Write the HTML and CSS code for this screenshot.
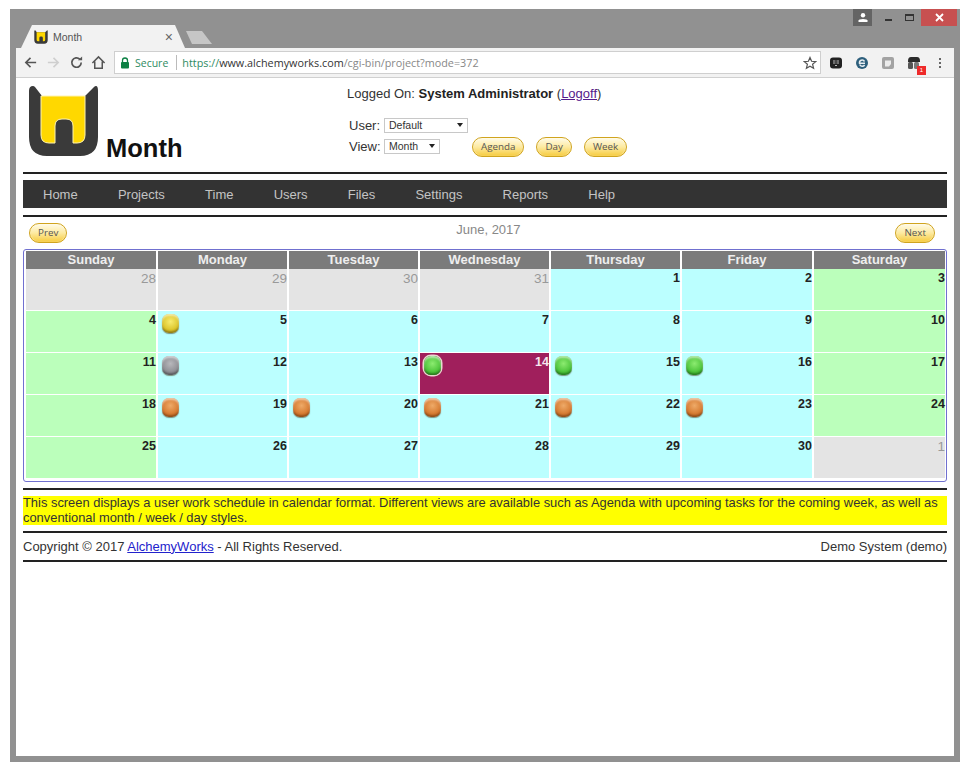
FILE: index.html
```html
<!DOCTYPE html>
<html lang="en">
<head>
<meta charset="utf-8">
<title>Month</title>
<link rel="stylesheet" href="styles.css">
</head>
<body>
<div class="window">
  <div class="titlebar">
    <div class="tab">
      <svg class="favicon" viewBox="0 0 71 72"><path fill="#3a3a3a" d="M1 6Q1 1 5 1Q6 1 7 2L14 11H57L66 2Q67 1 68 1Q70 1 70 6V52Q70 71 52 71H19Q1 71 1 52Z"/><path fill="#ffd800" d="M13 11H57V50Q57 58 49 58H45V41Q45 34 38 34H34Q27 34 27 41V58H21Q13 58 13 50Z"/></svg>
      <span class="tab-title">Month</span>
      <span class="tab-close">×</span>
    </div>
    <div class="newtab"></div>
    <div class="winctl">
      <div class="ctl user"><svg width="10" height="9" viewBox="0 0 10 9"><circle cx="5" cy="2.3" r="2.2" fill="#fff"/><path d="M0.5 9V7.6Q0.5 6 5 6Q9.5 6 9.5 7.6V9Z" fill="#fff"/></svg></div>
      <div class="ctl min"><span class="min-bar"></span></div>
      <div class="ctl max"><span class="max-box"></span></div>
      <div class="ctl close"><svg width="9" height="9" viewBox="0 0 9 9"><path d="M1 1L8 8M8 1L1 8" stroke="#fff" stroke-width="1.8"/></svg></div>
    </div>
  </div>
  <div class="toolbar">
    <svg class="tb-ico" viewBox="0 0 16 16"><path d="M14 8H3M8 3L3 8L8 13" fill="none" stroke="#555" stroke-width="1.7"/></svg>
    <svg class="tb-ico" viewBox="0 0 16 16"><path d="M2 8H13M8 3L13 8L8 13" fill="none" stroke="#cfcfcf" stroke-width="1.7"/></svg>
    <svg class="tb-ico" viewBox="0 0 16 16"><path d="M13 8A5 5 0 1 1 11.500 4.500" fill="none" stroke="#555" stroke-width="1.8"/><path d="M9.500 5.500H14V1.500Z" fill="#555"/></svg>
    <svg class="tb-ico" viewBox="0 0 16 16"><path d="M1.500 8.500L8 2L14.500 8.500M4 7V14H12V7" fill="none" stroke="#555" stroke-width="1.6"/></svg>
    <div class="omnibox">
      <svg class="lock" viewBox="0 0 10 12"><path d="M2.500 6V3.500A2.500 2.500 0 0 1 7.500 3.500V6" fill="none" stroke="#0b8043" stroke-width="1.300"/><rect x="1" y="5" width="8" height="6.500" rx="1" fill="#0b8043"/></svg>
      <span class="secure">Secure</span>
      <span class="omni-sep"></span>
      <span class="url"><span class="url-scheme">https://</span><span class="url-host">www.alchemyworks.com</span>/cgi-bin/project?mode=372</span>
      <svg class="star" viewBox="0 0 14 14"><path d="M7 1.500L8.600 5.300L12.700 5.600L9.600 8.300L10.600 12.300L7 10.200L3.400 12.300L4.400 8.300L1.300 5.600L5.400 5.300Z" fill="none" stroke="#555" stroke-width="1.200"/></svg>
    </div>
    <div class="exts">
      <svg class="ext" viewBox="0 0 14 14"><rect x="1" y="1.500" width="12" height="11" rx="3" fill="#222"/><path d="M4 5H6.500M7.500 5H10M4 7H6.500M7.500 7H10M6 9.500H8" stroke="#bbb" stroke-width="1"/></svg>
      <svg class="ext" viewBox="0 0 14 14"><circle cx="7" cy="7" r="6" fill="#2d5f7c"/><path d="M10 7.300H4.500A2.700 2.700 0 0 1 9.500 5.500M4.700 8.500A2.800 2.800 0 0 0 9.600 9" fill="none" stroke="#e8eef2" stroke-width="1.500"/></svg>
      <svg class="ext" viewBox="0 0 14 14"><rect x="1" y="1" width="12" height="12" rx="2" fill="#a3a3a3"/><path d="M4 4.500H10V8L8 10.500H4Z" fill="#ececec"/></svg>
      <div class="ext-badged">
        <svg class="ext" viewBox="0 0 14 14"><path d="M1 5Q1 1 4 1H10Q13 1 13 5V6H1Z" fill="#2b2b2b"/><rect x="1" y="6" width="5" height="7" rx="1.500" fill="#555"/><rect x="7" y="6" width="5" height="7" rx="1.500" fill="#777"/></svg>
        <span class="badge">1</span>
      </div>
      <div class="kebab"><i></i><i></i><i></i></div>
    </div>
  </div>
  <div class="content">
    <header class="head">
      <div class="brand">
        <svg class="logo" viewBox="0 0 71 72"><path fill="#3a3a3a" d="M1 6Q1 1 5 1Q6 1 7 2L14 11H57L66 2Q67 1 68 1Q70 1 70 6V52Q70 71 52 71H19Q1 71 1 52Z"/><path fill="#ffd800" stroke="#fff3b0" stroke-width="1" d="M13 11H57V50Q57 58 49 58H45V41Q45 34 38 34H34Q27 34 27 41V58H21Q13 58 13 50Z"/></svg>
        <h1 class="page-title">Month</h1>
      </div>
      <div class="userbox">
        <div class="logged">Logged On: <b>System Administrator</b> (<a class="logoff" href="#">Logoff</a>)</div>
        <div class="selrow"><span class="sel-label">User:</span><span class="sel sel-user">Default<i class="arrow"></i></span></div>
        <div class="selrow viewrow"><span class="sel-label">View:</span><span class="sel sel-view">Month<i class="arrow"></i></span>
          <div class="viewbtns"><a class="pill">Agenda</a><a class="pill">Day</a><a class="pill">Week</a></div>
        </div>
      </div>
    </header>
    <hr class="rule rule-head">
    <nav class="nav">
      <a>Home</a><a>Projects</a><a>Time</a><a>Users</a><a>Files</a><a>Settings</a><a>Reports</a><a>Help</a>
    </nav>
    <hr class="rule rule-nav">
    <div class="monthbar">
      <a class="pill">Prev</a>
      <span class="monthname">June, 2017</span>
      <a class="pill">Next</a>
    </div>
    <div class="calendar">
      <div class="cal-head">
        <div>Sunday</div><div>Monday</div><div>Tuesday</div><div>Wednesday</div><div>Thursday</div><div>Friday</div><div>Saturday</div>
      </div>
      <div class="cal-body">
        <div class="day off"><span class="num">28</span></div>
        <div class="day off"><span class="num">29</span></div>
        <div class="day off"><span class="num">30</span></div>
        <div class="day off"><span class="num">31</span></div>
        <div class="day work"><span class="num">1</span></div>
        <div class="day work"><span class="num">2</span></div>
        <div class="day end"><span class="num">3</span></div>

        <div class="day end"><span class="num">4</span></div>
        <div class="day work"><i class="gem yellow"></i><span class="num">5</span></div>
        <div class="day work"><span class="num">6</span></div>
        <div class="day work"><span class="num">7</span></div>
        <div class="day work"><span class="num">8</span></div>
        <div class="day work"><span class="num">9</span></div>
        <div class="day end"><span class="num">10</span></div>

        <div class="day end"><span class="num">11</span></div>
        <div class="day work"><i class="gem grey"></i><span class="num">12</span></div>
        <div class="day work"><span class="num">13</span></div>
        <div class="day today"><i class="gem green ring"></i><span class="num">14</span></div>
        <div class="day work"><i class="gem green"></i><span class="num">15</span></div>
        <div class="day work"><i class="gem green"></i><span class="num">16</span></div>
        <div class="day end"><span class="num">17</span></div>

        <div class="day end"><span class="num">18</span></div>
        <div class="day work"><i class="gem orange"></i><span class="num">19</span></div>
        <div class="day work"><i class="gem orange"></i><span class="num">20</span></div>
        <div class="day work"><i class="gem orange"></i><span class="num">21</span></div>
        <div class="day work"><i class="gem orange"></i><span class="num">22</span></div>
        <div class="day work"><i class="gem orange"></i><span class="num">23</span></div>
        <div class="day end"><span class="num">24</span></div>

        <div class="day end"><span class="num">25</span></div>
        <div class="day work"><span class="num">26</span></div>
        <div class="day work"><span class="num">27</span></div>
        <div class="day work"><span class="num">28</span></div>
        <div class="day work"><span class="num">29</span></div>
        <div class="day work"><span class="num">30</span></div>
        <div class="day off"><span class="num">1</span></div>
      </div>
    </div>
    <hr class="rule rule-cal">
    <p class="note">This screen displays a user work schedule in calendar format. Different views are available such as Agenda with upcoming tasks for the coming week, as well as conventional month / week / day styles.</p>
    <hr class="rule rule-note">
    <footer class="foot">
      <span>Copyright © 2017 <a class="foot-link" href="#">AlchemyWorks</a> - All Rights Reserved.</span>
      <span>Demo System (demo)</span>
    </footer>
    <hr class="rule rule-foot">
  </div>
</div>
</body>
</html>
```
FILE: styles.css
```css
* { box-sizing: border-box; }
html, body { margin: 0; padding: 0; background: #fff; }
body { padding: 9px 13px 12px 10px; height: 774px; overflow: hidden; font-family: "Liberation Sans", Arial, sans-serif; color: #333; }
.window { height: 753px; background: #919191; padding: 0 6px 6px 6px; display: flex; flex-direction: column; }

.titlebar { height: 39px; display: flex; align-items: flex-end; margin-right: -4px; position: relative; flex: none; }
.tab { width: 164px; height: 23px; margin-left: 5px; background: #f2f2f2; clip-path: polygon(0 100%, 11px 0, 154px 0, 100% 100%); display: flex; align-items: center; padding: 0 10px 0 13px; }
.favicon { width: 14px; height: 14px; flex: none; }
.tab-title { margin-left: 5px; font-size: 10.5px; color: #555; }
.tab-close { margin-left: auto; margin-right: 2px; font-size: 14px; color: #666; }
.newtab { width: 27px; height: 13px; margin-bottom: 4px; background: #c6c6c6; clip-path: polygon(1px 0, 17px 0, 100% 100%, 7px 100%); }
.winctl { display: flex; position: absolute; top: 0; right: 1px; height: 17px; }
.ctl { display: flex; align-items: center; justify-content: center; height: 17px; }
.user { width: 19px; background: #646464; margin-right: 7px; }
.min { width: 18px; margin-right: 3px; }
.min-bar { width: 7px; height: 2px; background: #333; margin-top: 5px; }
.max { width: 18px; margin-right: 3px; }
.max-box { width: 9px; height: 7px; border: 1px solid #333; border-top-width: 2px; }
.close { width: 36px; background: #c75050; }

.toolbar { height: 30px; background: #f2f2f2; border-bottom: 1px solid #d0d0d0; display: flex; align-items: center; padding: 0 0 0 7px; flex: none; }
.tb-ico { width: 15px; height: 15px; margin-right: 8px; flex: none; }
.tb-ico:nth-child(3) { margin-right: 7px; }
.tb-ico:nth-child(4) { margin-right: 8px; }
.omnibox { width: 707px; height: 23px; background: #fff; border: 1px solid #cfcfcf; display: flex; align-items: center; padding: 0 3px 0 5px; font-size: 11px; font-family: "Open Sans", sans-serif; }
.lock { width: 10px; height: 12px; flex: none; }
.secure { margin-left: 5px; color: #2e8b62; font-size: 10.5px; }
.omni-sep { width: 1px; height: 15px; background: #bbb; margin: 0 5px 0 8px; }
.url { color: #888; font-size: 10.8px; white-space: nowrap; }
.url-scheme { color: #2e8b62; }
.url-host { color: #333; }
.star { width: 14px; height: 14px; margin-left: auto; }
.exts { display: flex; align-items: center; margin-left: 8px; gap: 12px; }
.ext { width: 14px; height: 14px; display: block; }
.ext-badged { position: relative; }
.badge { position: absolute; right: -5px; bottom: -5px; width: 9px; height: 9px; background: #ee2a2a; color: #fff; font-size: 6px; line-height: 9px; text-align: center; }
.kebab { display: flex; flex-direction: column; gap: 2px; margin-left: 6px; }
.kebab i { width: 2px; height: 2px; background: #666; display: block; }

.content { flex: 1; background: #fff; padding: 0 7px; min-height: 0; }
.head { height: 94px; display: grid; grid-template-columns: 323px 1fr; }
.brand { display: flex; align-items: flex-end; height: 80px; padding: 0 0 0 5px; margin-top: 7px; }
.logo { width: 71px; height: 72px; display: block; margin-bottom: 8px; }
.page-title { margin: 0 0 4px 7px; font-size: 25.5px; line-height: 26px; font-weight: bold; color: #111; }
.userbox { padding-top: 7px; font-size: 13px; color: #333; }
.logged { line-height: 17px; height: 17px; margin-bottom: 15px; margin-left: 1px; white-space: nowrap; }
.logged b { color: #222; }
.logoff { color: #551a8b; }
.selrow { display: flex; align-items: center; height: 16px; margin-bottom: 4px; padding-left: 3px; }
.viewrow { height: 20px; }
.sel-label { width: 35px; font-size: 13px; }
.viewrow .sel-label, .viewrow .sel { margin-bottom: 2px; }
.sel { display: flex; align-items: center; height: 15px; border: 1px solid #c8c8c8; background: #fff; padding: 0 4px 0 4px; font-size: 10.5px; color: #333; justify-content: space-between; }
.sel-user { width: 84px; }
.sel-view { width: 56px; }
.arrow { width: 0; height: 0; border-left: 3px solid transparent; border-right: 3px solid transparent; border-top: 4px solid #222; }
.viewbtns { display: flex; gap: 12px; margin-left: 32px; }
.pill { display: block; height: 20px; padding: 0 8px; border-radius: 10px; border: 1px solid #d0a41e; background: linear-gradient(#fffbe8 0%, #fdeaa0 50%, #f6cb3e 100%); box-shadow: inset 0 0 1px #fff; font-family: "Open Sans", "Liberation Sans", sans-serif; font-size: 9.8px; line-height: 18px; color: #555; text-align: center; }

.rule { border: 0; margin: 0; background: #222; height: 2px; }
.rule-head { margin-bottom: 6px; }
.nav { height: 28px; background: #333; display: flex; padding-left: 20px; gap: 40.2px; align-items: center; }
.nav a { color: #c4c4c4; font-size: 13px; }
.rule-nav { margin-top: 7px; }
.monthbar { height: 32px; display: flex; justify-content: space-between; padding: 6px 12px 0 6px; }
.monthname { font-size: 13px; color: #888; line-height: 14px; margin-left: 14px; }
.calendar { border: 1px solid #7070d0; border-radius: 3px; height: 233px; padding: 1px 1px 0 2px; }
.cal-head { display: grid; grid-template-columns: 130px repeat(4, 129px) 130px 131px; column-gap: 2px; height: 18px; }
.cal-head div { background: #7b7b7b; color: #eee; font-size: 13px; font-weight: bold; text-align: center; line-height: 17px; }
.cal-body { display: grid; grid-template-columns: 130px repeat(4, 129px) 130px 131px; column-gap: 2px; row-gap: 1px; grid-auto-rows: 41px; }
.day { display: flex; justify-content: space-between; align-items: flex-start; padding: 2px 0 0 4px; }
.day .num { margin-left: auto; font-size: 12.5px; font-weight: bold; color: #222; line-height: 15px; }
.off { background: #e4e4e4; }
.off .num { font-weight: normal; color: #999; font-size: 13.5px; }
.work { background: #bbffff; }
.end { background: #bbffbb; }
.today { background: #a01f5c; }
.today .num { color: #f5e6ee; }
.gem { display: block; width: 17px; height: 19px; margin-top: 1px; border-radius: 7px; flex: none; }
.yellow { background: radial-gradient(circle at 50% 40%, #f7ec70 0%, #dcc52a 60%, #8d7d12 100%); box-shadow: inset 0 2px 2px rgba(255,255,255,.55), inset 0 -2px 2px rgba(60,40,0,.3), 0 1px 1px rgba(60,40,0,.5); }
.grey { background: radial-gradient(circle at 50% 40%, #b8b8bc 0%, #8f8f94 60%, #56565a 100%); box-shadow: inset 0 2px 2px rgba(255,255,255,.55), inset 0 -2px 2px rgba(30,30,30,.3), 0 1px 1px rgba(60,40,0,.5); }
.green { background: radial-gradient(circle at 50% 40%, #8ceb70 0%, #4cc43a 60%, #257d1c 100%); box-shadow: inset 0 2px 2px rgba(255,255,255,.55), inset 0 -2px 2px rgba(0,50,0,.3), 0 1px 1px rgba(60,40,0,.5); }
.orange { background: radial-gradient(circle at 50% 40%, #eeaa68 0%, #d67a30 60%, #8e4a14 100%); box-shadow: inset 0 2px 2px rgba(255,255,255,.55), inset 0 -2px 2px rgba(70,30,0,.3), 0 1px 1px rgba(60,40,0,.5); }
.green.ring { box-shadow: inset 0 2px 2px rgba(255,255,255,.55), inset 0 -2px 2px rgba(0,50,0,.3), 0 0 0 1.5px #e8d8cf; }

.rule-cal { margin-top: 6px; }
.note { margin: 6px 0 0; height: 29px; background: #ffff00; font-size: 12.9px; line-height: 14.5px; color: #333; }
.rule-note { margin-top: 6px; }
.foot { height: 27px; display: flex; justify-content: space-between; align-items: center; padding-bottom: 1px; font-size: 13px; color: #333; }
.foot-link { color: #2222cc; }
```
